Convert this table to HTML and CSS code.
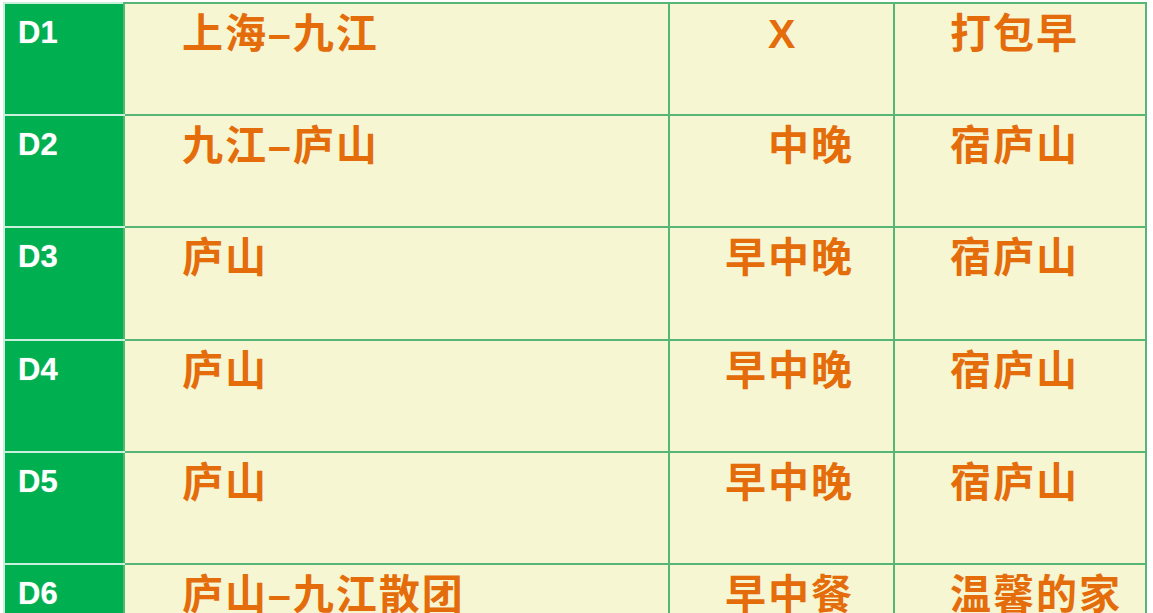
FILE: index.html
```html
<!DOCTYPE html>
<html lang="zh-CN">
<head>
<meta charset="utf-8">
<title>行程表</title>
<link rel="stylesheet" href="styles.css">
</head>
<body>
<table class="itinerary">
  <colgroup>
    <col class="c-day">
    <col class="c-route">
    <col class="c-meal">
    <col class="c-stay">
  </colgroup>
  <tbody>
    <tr>
      <td class="day">D1</td>
      <td class="route">上海–九江</td>
      <td class="meal">　X</td>
      <td class="stay">打包早</td>
    </tr>
    <tr>
      <td class="day">D2</td>
      <td class="route">九江–庐山</td>
      <td class="meal">　中晚</td>
      <td class="stay">宿庐山</td>
    </tr>
    <tr>
      <td class="day">D3</td>
      <td class="route">庐山</td>
      <td class="meal">早中晚</td>
      <td class="stay">宿庐山</td>
    </tr>
    <tr>
      <td class="day">D4</td>
      <td class="route">庐山</td>
      <td class="meal">早中晚</td>
      <td class="stay">宿庐山</td>
    </tr>
    <tr>
      <td class="day">D5</td>
      <td class="route">庐山</td>
      <td class="meal">早中晚</td>
      <td class="stay">宿庐山</td>
    </tr>
    <tr>
      <td class="day">D6</td>
      <td class="route">庐山–九江散团</td>
      <td class="meal">早中餐</td>
      <td class="stay">温馨的家</td>
    </tr>
  </tbody>
</table>
</body>
</html>
```
FILE: styles.css
```css
html, body {
  margin: 0;
  padding: 0;
  background: #ffffff;
  overflow: hidden;
}

.itinerary {
  margin: 2px 0 0 3px;
  border-collapse: collapse;
  table-layout: fixed;
  width: 1142px;
}

.c-day { width: 120px; }
.c-route { width: 545px; }
.c-meal { width: 225px; }
.c-stay { width: 252px; }

.itinerary tr {
  height: 112.2px;
}

.itinerary td {
  border: 2px solid #55b676;
  background: #f6f6d2;
  vertical-align: top;
  padding: 0;
  font-family: "Liberation Sans", "Noto Sans CJK SC", sans-serif;
  font-weight: 700;
  color: #e46c0a;
  font-size: 41px;
  letter-spacing: 2px;
  line-height: 1;
  padding-top: 10px;
  white-space: nowrap;
}

.itinerary td.day {
  background: #00b050;
  color: #ffffff;
  font-size: 31px;
  letter-spacing: 0;
  padding: 13px 0 0 13px;
  border-color: #c9f0dc;
  border-right-color: #55b676;
  text-shadow: 0 0 1px rgba(200, 255, 230, 0.6);
}

.itinerary td.route {
  padding-left: 57px;
}

.itinerary td.meal {
  padding-left: 55px;
}

.itinerary td.stay {
  padding-left: 55px;
}
```
